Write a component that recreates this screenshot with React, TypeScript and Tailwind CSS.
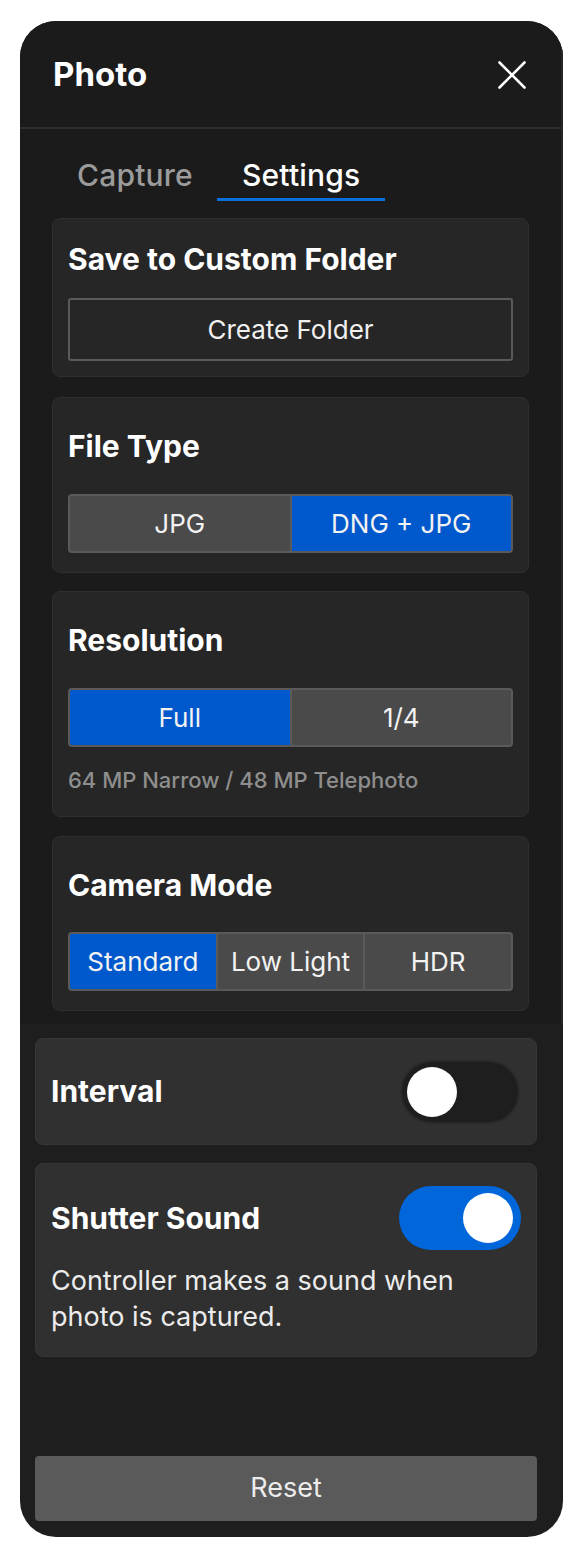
import { useState } from "react";

type Option = { label: string; value: string };

function Segmented({
  options,
  value,
  onChange,
}: {
  options: Option[];
  value: string;
  onChange: (v: string) => void;
}) {
  return (
    <div className="flex h-[59px] overflow-hidden rounded-[4px] border-2 border-[#5a5a5a] bg-[#4a4a4a]">
      {options.map((opt, i) => (
        <button
          key={opt.value}
          onClick={() => onChange(opt.value)}
          className={
            (value === opt.value ? "bg-[#0059cc] " : "bg-[#4a4a4a] ") +
            (i > 0 ? "border-l-2 border-[#5a5a5a] " : "") +
            "flex-1 text-[26px] leading-none text-[#f2f2f2]"
          }
        >
          {opt.label}
        </button>
      ))}
    </div>
  );
}

function Toggle({ on, onClick }: { on: boolean; onClick: () => void }) {
  return (
    <button
      onClick={onClick}
      className={
        on
          ? "flex h-[64px] w-[122px] items-center justify-end rounded-full bg-[#0066d9] pr-[8px]"
          : "flex h-[64px] w-[120px] items-center justify-start rounded-full border-2 border-[#2a2a2a] bg-[#1e1e1e] pl-[5px]"
      }
    >
      <span className="h-[50px] w-[50px] rounded-full bg-white" />
    </button>
  );
}

export default function App() {
  const [tab, setTab] = useState("settings");
  const [fileType, setFileType] = useState("dng");
  const [resolution, setResolution] = useState("full");
  const [mode, setMode] = useState("standard");
  const [interval, setInterval] = useState(false);
  const [shutter, setShutter] = useState(true);

  return (
    <div className="h-[1558px] w-[588px] bg-white pl-[20px] pt-[21px] font-['Inter',sans-serif]">
      <div className="flex h-[1516px] w-[543px] flex-col overflow-hidden rounded-[36px] bg-[#1e1e1e] text-white">
        {/* top: header, tabs, settings cards */}
        <div className="border-r-2 border-[#262626] bg-[#1b1b1b] pb-[13px]">
          <div className="flex h-[108px] items-center justify-between border-b-2 border-[#2e2e2e] pl-[33px] pr-[35px] pt-[2px]">
            <h1 className="text-[33px] font-bold">Photo</h1>
            <svg width="28" height="28" viewBox="0 0 28 28">
              <path d="M1.5 1.5L26.5 26.5M26.5 1.5L1.5 26.5" stroke="white" strokeWidth="2.6" strokeLinecap="round" />
            </svg>
          </div>

          <div className="flex pl-[33px] pt-[29px]">
            {[
              { id: "capture", label: "Capture" },
              { id: "settings", label: "Settings" },
            ].map((t) => (
              <button
                key={t.id}
                onClick={() => setTab(t.id)}
                className={
                  (tab === t.id ? "border-[#0a6fdc] px-[25px] text-white " : "border-transparent px-[24px] text-[#9b9b9b] ") +
                  "border-b-[3px] pb-[6px] text-[30px] font-medium leading-[34px] tracking-[0.2px]"
                }
              >
                {t.label}
              </button>
            ))}
          </div>

          <div className="mt-[17px] flex flex-col px-[32px]">
            <section className="rounded-[8px] border border-[#2f2f2f] bg-[#262626] px-[15px] pb-[15px] pt-[23px]">
              <h2 className="text-[30px] font-bold leading-[34px]">Save to Custom Folder</h2>
              <button className="mt-[22px] flex h-[63px] w-full items-center justify-center rounded-[3px] border-2 border-[#5a5a5a] text-[26px] text-[#f0f0f0]">
                Create Folder
              </button>
            </section>

            <section className="mt-[20px] rounded-[8px] border border-[#2f2f2f] bg-[#262626] px-[15px] pb-[19px] pt-[31px]">
              <h2 className="text-[30px] font-bold leading-[34px]">File Type</h2>
              <div className="mt-[31px]">
                <Segmented
                  value={fileType}
                  onChange={setFileType}
                  options={[
                    { label: "JPG", value: "jpg" },
                    { label: "DNG + JPG", value: "dng" },
                  ]}
                />
              </div>
            </section>

            <section className="mt-[18px] rounded-[8px] border border-[#2f2f2f] bg-[#262626] px-[15px] pb-[22px] pt-[31px]">
              <h2 className="text-[30px] font-bold leading-[34px]">Resolution</h2>
              <div className="mt-[31px]">
                <Segmented
                  value={resolution}
                  onChange={setResolution}
                  options={[
                    { label: "Full", value: "full" },
                    { label: "1/4", value: "quarter" },
                  ]}
                />
              </div>
              <p className="mt-[19px] text-[22px] font-medium leading-[28px] text-[#8e8e8e]">
                64 MP Narrow / 48 MP Telephoto
              </p>
            </section>

            <section className="mt-[19px] rounded-[8px] border border-[#2f2f2f] bg-[#262626] px-[15px] pb-[19px] pt-[31px]">
              <h2 className="text-[30px] font-bold leading-[34px]">Camera Mode</h2>
              <div className="mt-[30px]">
                <Segmented
                  value={mode}
                  onChange={setMode}
                  options={[
                    { label: "Standard", value: "standard" },
                    { label: "Low Light", value: "low" },
                    { label: "HDR", value: "hdr" },
                  ]}
                />
              </div>
            </section>
          </div>
        </div>

        {/* bottom: toggles */}
        <div className="flex flex-col gap-[18px] pl-[15px] pr-[26px] pt-[14px]">
          <section className="flex h-[107px] items-center justify-between rounded-[8px] border border-[#363636] bg-[#303030] pl-[15px] pr-[16px]">
            <h2 className="text-[30px] font-bold">Interval</h2>
            <Toggle on={interval} onClick={() => setInterval(!interval)} />
          </section>

          <section className="rounded-[8px] border border-[#363636] bg-[#303030] pb-[21px] pl-[15px] pr-[15px] pt-[22px]">
            <div className="flex items-center justify-between">
              <h2 className="text-[30px] font-bold">Shutter Sound</h2>
              <Toggle on={shutter} onClick={() => setShutter(!shutter)} />
            </div>
            <p className="mt-[13px] text-[27px] leading-[36px] text-[#ececec]">
              Controller makes a sound when
              <br />
              photo is captured.
            </p>
          </section>
        </div>

        <div className="flex-1" />

        <button className="mb-[16px] ml-[15px] mr-[26px] flex h-[65px] items-center justify-center rounded-[4px] bg-[#5a5a5a] text-[27px] text-[#ececec]">
          Reset
        </button>
      </div>
    </div>
  );
}
